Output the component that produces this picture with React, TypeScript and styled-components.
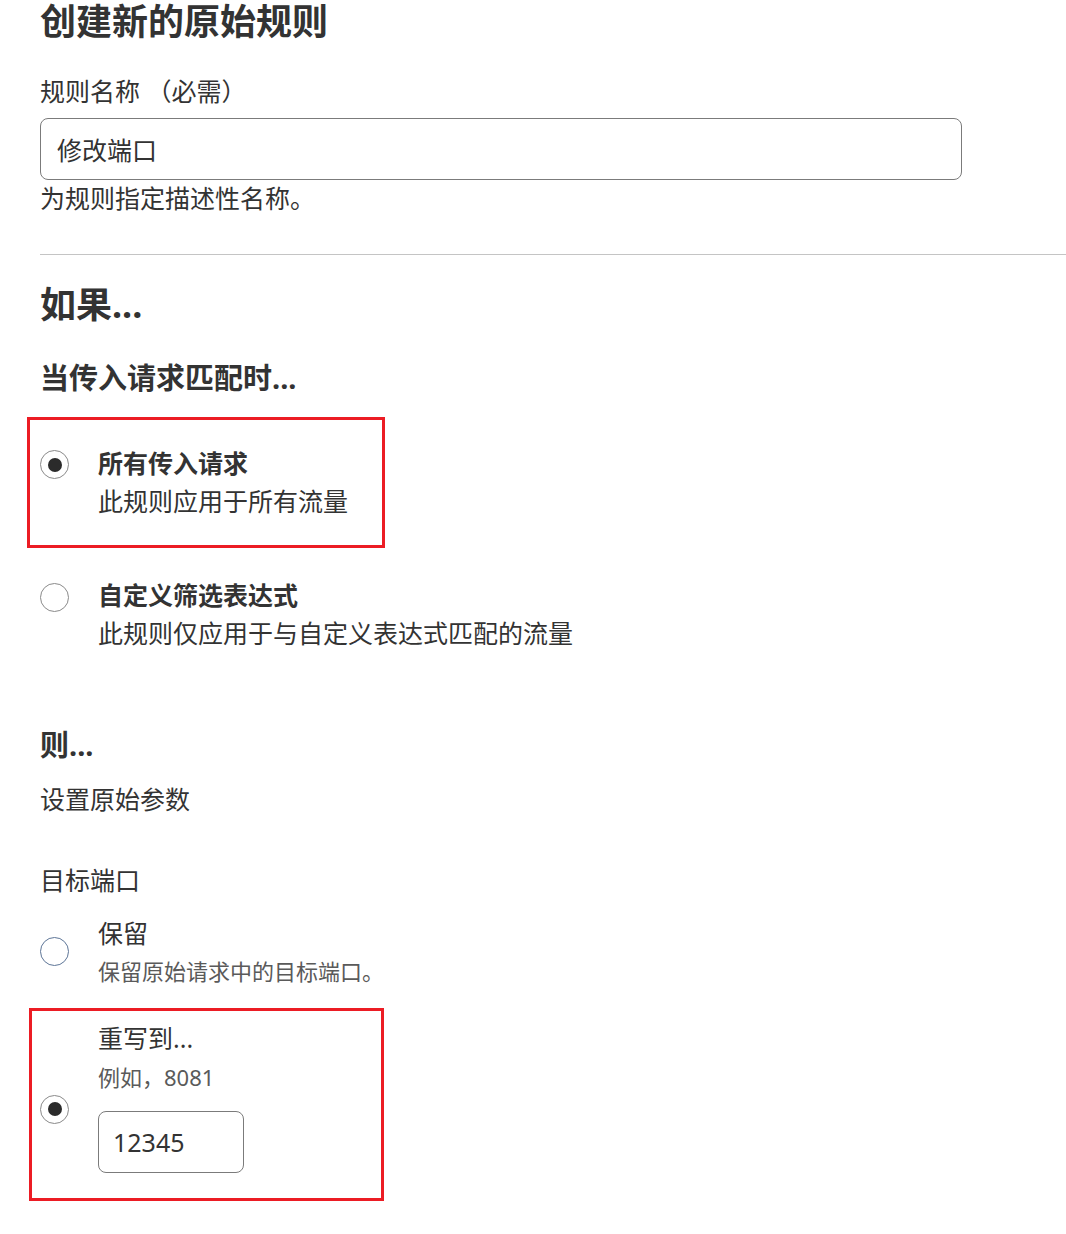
import React from "react";
import styled, { createGlobalStyle } from "styled-components";

const GlobalStyle = createGlobalStyle`
  html, body {
    margin: 0;
    padding: 0;
    background: #ffffff;
  }
  body {
    font-family: "Noto Sans", "Noto Sans CJK SC", sans-serif;
    color: #333333;
  }
  * { box-sizing: border-box; }
`;

const Page = styled.main`
  padding: 0 0 40px 40px;
  display: flex;
  flex-direction: column;
`;

const Title = styled.h1`
  margin: 0;
  font-size: 36px;
  line-height: 44px;
  font-weight: 700;
  color: #333;
`;

const Field = styled.div`
  display: flex;
  flex-direction: column;
  margin-top: 29px;
  margin-right: 104px;
`;

const Label = styled.label`
  font-size: 25px;
  line-height: 36px;
  color: #333;
`;

const TextInput = styled.input<{ $width?: number }>`
  display: block;
  width: ${(p) => (p.$width ? `${p.$width}px` : "100%")};
  height: 62px;
  margin-top: 9px;
  padding: 0 14px 0 16px;
  border: 1px solid #7b7b7b;
  border-radius: 8px;
  font-family: "Noto Sans", "Noto Sans CJK SC", sans-serif;
  font-size: 25px;
  color: #333;
  background: #fff;
  outline: none;
`;

const Hint = styled.div`
  font-size: 25px;
  line-height: 36px;
  color: #333;
`;

const Divider = styled.hr`
  margin: 38px 0 0 0;
  border: none;
  height: 1px;
  background: #c4c4c4;
`;

const SectionTitle = styled.h2`
  margin: 28px 0 0 0;
  font-size: 36px;
  line-height: 44px;
  font-weight: 700;
  color: #333;
`;

const SubTitle = styled.h3<{ $gap: number }>`
  margin: ${(p) => p.$gap}px 0 0 0;
  font-size: 29px;
  line-height: 36px;
  font-weight: 700;
  color: #333;
`;

const Paragraph = styled.p<{ $gap: number }>`
  margin: ${(p) => p.$gap}px 0 0 0;
  font-size: 25px;
  line-height: 36px;
  color: #333;
`;

const Highlight = styled.div<{ $offset: number; $width: number; $gap: number; $padTop: number; $padBottom: number }>`
  margin: ${(p) => p.$gap}px 0 0 -${(p) => p.$offset}px;
  padding: ${(p) => p.$padTop}px 0 ${(p) => p.$padBottom}px ${(p) => p.$offset - 3}px;
  width: ${(p) => p.$width}px;
  border: 3px solid #ec1c24;
`;

const Option = styled.label<{ $center?: boolean; $gap?: number }>`
  display: flex;
  align-items: ${(p) => (p.$center ? "center" : "flex-start")};
  gap: 29px;
  margin-top: ${(p) => p.$gap ?? 0}px;
  cursor: pointer;
`;

const Radio = styled.input.attrs({ type: "radio" })<{ $tone?: string; $top?: number }>`
  appearance: none;
  -webkit-appearance: none;
  flex: none;
  width: 29px;
  height: 29px;
  margin: ${(p) => p.$top ?? 0}px 0 0 0;
  border: 1px solid ${(p) => p.$tone ?? "#8a8a8a"};
  border-radius: 50%;
  background: #fff;
  display: grid;
  place-items: center;
  cursor: pointer;
  &:checked::after {
    content: "";
    width: 14px;
    height: 14px;
    border-radius: 50%;
    background: #2b2b2b;
  }
`;

const OptionBody = styled.div`
  display: flex;
  flex-direction: column;
`;

const OptionTitle = styled.span<{ $bold?: boolean }>`
  font-size: 25px;
  line-height: 36px;
  font-weight: ${(p) => (p.$bold ? 700 : 400)};
  color: #333;
`;

const OptionDesc = styled.span<{ $gap?: number }>`
  margin-top: ${(p) => p.$gap ?? 2}px;
  font-size: 25px;
  line-height: 36px;
  color: #333;
`;

const OptionNote = styled.span<{ $gap?: number }>`
  margin-top: ${(p) => p.$gap ?? 4}px;
  font-size: 22px;
  line-height: 32px;
  color: #5a5a5a;
`;

const PortInput = styled(TextInput)`
  margin-top: 18px;
  margin-bottom: 25px;
  padding-left: 14px;
`;

export default function App() {
  return (
    <>
      <GlobalStyle />
      <Page>
        <Title>创建新的原始规则</Title>

        <Field>
          <Label htmlFor="rule-name">规则名称 （必需）</Label>
          <TextInput id="rule-name" defaultValue="修改端口" />
          <Hint>为规则指定描述性名称。</Hint>
        </Field>

        <Divider />

        <SectionTitle>如果...</SectionTitle>
        <SubTitle $gap={33}>当传入请求匹配时...</SubTitle>

        <Highlight $offset={13} $width={358} $gap={21} $padTop={25} $padBottom={26}>
          <Option>
            <Radio name="match" defaultChecked $top={5} />
            <OptionBody>
              <OptionTitle $bold>所有传入请求</OptionTitle>
              <OptionDesc>此规则应用于所有流量</OptionDesc>
            </OptionBody>
          </Option>
        </Highlight>

        <Option $gap={29}>
          <Radio name="match" $top={6} />
          <OptionBody>
            <OptionTitle $bold>自定义筛选表达式</OptionTitle>
            <OptionDesc>此规则仅应用于与自定义表达式匹配的流量</OptionDesc>
          </OptionBody>
        </Option>

        <SubTitle $gap={76}>则...</SubTitle>
        <Paragraph $gap={18}>设置原始参数</Paragraph>
        <Paragraph $gap={45}>目标端口</Paragraph>

        <Option $center $gap={17}>
          <Radio name="port" $tone="#5d7597" />
          <OptionBody>
            <OptionTitle>保留</OptionTitle>
            <OptionNote>保留原始请求中的目标端口。</OptionNote>
          </OptionBody>
        </Option>

        <Highlight $offset={11} $width={355} $gap={21} $padTop={9} $padBottom={0}>
          <Option $center>
            <Radio name="port" defaultChecked />
            <OptionBody>
              <OptionTitle>重写到...</OptionTitle>
              <OptionNote $gap={5}>例如，8081</OptionNote>
              <PortInput $width={146} defaultValue="12345" />
            </OptionBody>
          </Option>
        </Highlight>
      </Page>
    </>
  );
}
